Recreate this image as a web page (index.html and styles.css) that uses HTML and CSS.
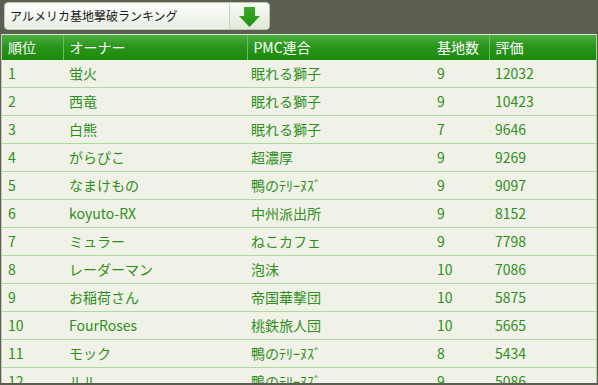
FILE: index.html
```html
<!DOCTYPE html>
<html lang="ja">
<head>
<meta charset="utf-8">
<link rel="stylesheet" href="styles.css">
</head>
<body>
<div class="page">
  <div class="select">
    <div class="select-text">アルメリカ基地撃破ランキング</div>
    <div class="select-btn">
      <svg width="21" height="20" viewBox="0 0 21 20">
        <defs>
          <linearGradient id="ag" x1="0" y1="0" x2="0" y2="1">
            <stop offset="0" stop-color="#3aa82a"/>
            <stop offset="1" stop-color="#239214"/>
          </linearGradient>
        </defs>
        <path d="M5 0 H16 V9 H21 L10.5 20 L0 9 H5 Z" fill="url(#ag)"/>
      </svg>
    </div>
  </div>
  <div class="panel">
    <table class="rank">
      <colgroup>
        <col class="c1"><col class="c2"><col class="c3"><col class="c4"><col class="c5">
      </colgroup>
      <thead>
        <tr>
          <th class="sep">順位</th>
          <th class="sep">オーナー</th>
          <th>PMC連合</th>
          <th class="sep">基地数</th>
          <th>評価</th>
        </tr>
      </thead>
      <tbody>
        <tr><td>1</td><td>蛍火</td><td>眠れる獅子</td><td>9</td><td>12032</td></tr>
        <tr><td>2</td><td>西竜</td><td>眠れる獅子</td><td>9</td><td>10423</td></tr>
        <tr><td>3</td><td>白熊</td><td>眠れる獅子</td><td>7</td><td>9646</td></tr>
        <tr><td>4</td><td>がらぴこ</td><td>超濃厚</td><td>9</td><td>9269</td></tr>
        <tr><td>5</td><td>なまけもの</td><td>鴨のﾃﾘｰﾇｽﾞ</td><td>9</td><td>9097</td></tr>
        <tr><td>6</td><td>koyuto-RX</td><td>中州派出所</td><td>9</td><td>8152</td></tr>
        <tr><td>7</td><td>ミュラー</td><td>ねこカフェ</td><td>9</td><td>7798</td></tr>
        <tr><td>8</td><td>レーダーマン</td><td>泡沫</td><td>10</td><td>7086</td></tr>
        <tr><td>9</td><td>お稲荷さん</td><td>帝国華撃団</td><td>10</td><td>5875</td></tr>
        <tr><td>10</td><td>FourRoses</td><td>桃鉄旅人団</td><td>10</td><td>5665</td></tr>
        <tr><td>11</td><td>モック</td><td>鴨のﾃﾘｰﾇｽﾞ</td><td>8</td><td>5434</td></tr>
        <tr><td>12</td><td>ルル</td><td>鴨のﾃﾘｰﾇｽﾞ</td><td>9</td><td>5086</td></tr>
      </tbody>
    </table>
  </div>
</div>
</body>
</html>
```

FILE: styles.css
```css
html, body {
  margin: 0;
  padding: 0;
  overflow: hidden;
}
body {
  background: #5d5d51;
  font-family: "Noto Sans CJK JP", "Noto Sans", sans-serif;
}
.page {
  padding: 2px 0 0 1px;
}
.select {
  margin-left: 3px;
  width: 264px;
  height: 26px;
  display: flex;
  border: 1px solid #b8ccb0;
  border-radius: 4px;
  background: linear-gradient(#ffffff, #e6ede0);
  box-shadow: inset 0 0 0 1px #f4f8f0;
}
.select-text {
  flex: 1;
  padding-left: 5px;
  font-size: 12px;
  line-height: 26px;
  color: #1a1a1a;
  white-space: nowrap;
}
.select-btn {
  width: 39px;
  border-left: 1px solid #c4d6bc;
  display: flex;
  align-items: center;
  justify-content: center;
  background: linear-gradient(#f8fbf4, #e0e9d8);
  border-radius: 0 4px 4px 0;
}
.select-btn svg {
  display: block;
  margin-top: 1px;
}
.panel {
  margin-top: 4px;
  width: 594px;
  height: 348px;
  overflow: hidden;
  border-left: 1px solid #c6c8bc;
  border-right: 1px solid #a6d894;
  border-top: 1px solid #d4e8cc;
  background: #f1f2e7;
}
.rank {
  width: 594px;
  border-collapse: collapse;
  table-layout: fixed;
  font-size: 14px;
}
.c1 { width: 61px; }
.c2 { width: 184px; }
.c3 { width: 184px; }
.c4 { width: 58px; }
.c5 { width: 107px; }
.rank th {
  height: 25px;
  padding: 0 0 0 6px;
  text-align: left;
  font-weight: normal;
  color: #ffffff;
  background: linear-gradient(#4dad43, #2a961c 45%, #1a8a0b);
  line-height: 25px;
}
.rank th.sep {
  border-right: 1px solid #6cbd60;
}
.rank td {
  height: 27px;
  padding: 0 0 0 6px;
  line-height: 27px;
  color: #2e8f1e;
  border-bottom: 1px solid #a9dc98;
  white-space: nowrap;
  overflow: hidden;
}
.rank td:nth-child(3) { padding-left: 4px; }
```
